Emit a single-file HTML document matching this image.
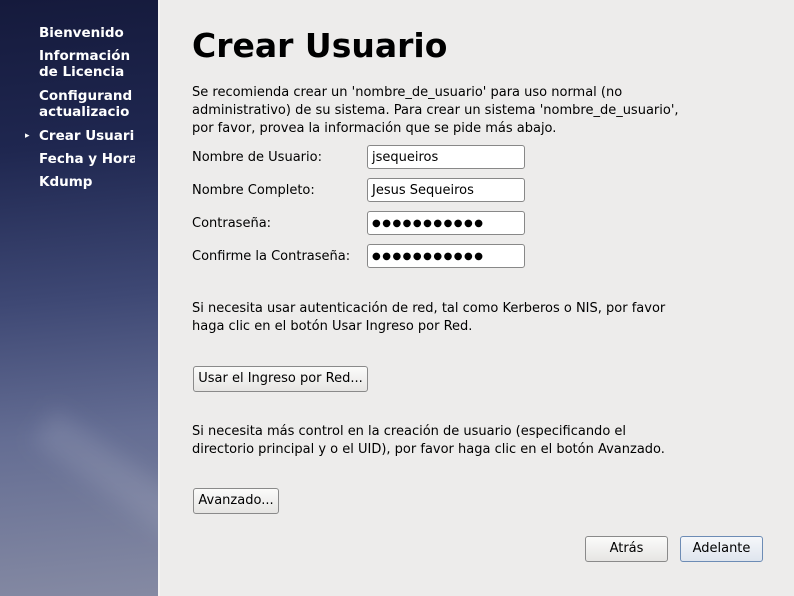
<!DOCTYPE html>
<html><head><meta charset="utf-8"><style>
body{margin:0;width:794px;height:596px;background:#edeceb;font-family:"DejaVu Sans",sans-serif;font-size:13px;color:#000;position:relative;overflow:hidden}
#side{position:absolute;left:0;top:0;width:158px;height:596px;background:linear-gradient(175deg,#151a3c 0%,#1f2750 25%,#3e4874 50%,#646d93 72%,#858aa3 100%);overflow:hidden}
#side .streak{position:absolute;left:20px;top:480px;width:260px;height:40px;background:rgba(255,255,255,0.10);transform:rotate(35deg);filter:blur(10px)}
#side div.i{position:absolute;left:39px;width:96px;overflow:hidden;color:#fff;font-weight:bold;font-size:13.5px;line-height:16px;white-space:nowrap}
#sep{position:absolute;left:158px;top:0;width:2px;height:596px;background:#f4f3f2}
.a{position:absolute;white-space:nowrap}
h1{position:absolute;left:192px;top:26px;margin:0;font-size:33px;font-weight:bold}
.inp{position:absolute;left:367px;width:158px;height:24px;border:1px solid #888;border-radius:3px;background:#fff;box-sizing:border-box;padding:4px 4px;font-size:13px;line-height:16px}
.dots{letter-spacing:1.5px;font-size:10px}
.btn{position:absolute;border:1px solid #8a8a8a;border-radius:3px;background:linear-gradient(#fbfbfa,#e6e5e3);box-sizing:border-box;text-align:center;line-height:24px}
</style></head><body>
<div id="side"><div class="streak"></div>
<div class="i" style="top:25px">Bienvenido</div>
<div class="i" style="top:48px">Información<br>de Licencia</div>
<div class="i" style="top:88px">Configurand<br>actualizacio</div>
<div class="i" style="top:128px;left:25px;font-size:9px">▸</div>
<div class="i" style="top:128px">Crear Usuari</div>
<div class="i" style="top:151px">Fecha y Hora</div>
<div class="i" style="top:174px">Kdump</div>
</div>
<div id="sep"></div>
<h1>Crear Usuario</h1>
<div class="a" style="left:192px;top:84px;line-height:18px">Se recomienda crear un 'nombre_de_usuario' para uso normal (no<br>administrativo) de su sistema. Para crear un sistema 'nombre_de_usuario',<br>por favor, provea la información que se pide más abajo.</div>
<div class="a" style="left:192px;top:150px">Nombre de Usuario:</div>
<div class="a" style="left:192px;top:183px">Nombre Completo:</div>
<div class="a" style="left:192px;top:216px">Contraseña:</div>
<div class="a" style="left:192px;top:249px">Confirme la Contraseña:</div>
<div class="inp" style="top:145px">jsequeiros</div>
<div class="inp" style="top:178px">Jesus Sequeiros</div>
<div class="inp dots" style="top:211px;line-height:16px">●●●●●●●●●●●</div>
<div class="inp dots" style="top:244px;line-height:16px">●●●●●●●●●●●</div>
<div class="a" style="left:192px;top:300px;line-height:18px">Si necesita usar autenticación de red, tal como Kerberos o NIS, por favor<br>haga clic en el botón Usar Ingreso por Red.</div>
<div class="btn" style="left:193px;top:366px;width:175px;height:26px">Usar el Ingreso por Red...</div>
<div class="a" style="left:192px;top:423px;line-height:18px">Si necesita más control en la creación de usuario (especificando el<br>directorio principal y o el UID), por favor haga clic en el botón Avanzado.</div>
<div class="btn" style="left:193px;top:488px;width:86px;height:26px">Avanzado...</div>
<div class="btn" style="left:585px;top:536px;width:83px;height:26px">Atrás</div>
<div class="btn" style="left:680px;top:536px;width:83px;height:26px;border-color:#6d8cb5;background:linear-gradient(#f5f7fa,#dfe5ee)">Adelante</div>
</body></html>
